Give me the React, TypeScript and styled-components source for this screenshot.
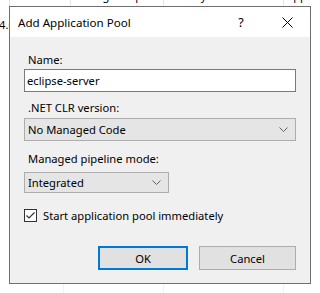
import styled, { createGlobalStyle } from "styled-components";

const Global = createGlobalStyle`
  html, body {
    margin: 0;
    padding: 0;
    background: #ffffff;
  }
  body {
    width: 320px;
    height: 293px;
    overflow: hidden;
    font-family: "Noto Sans", "Open Sans", sans-serif;
    font-size: 11.2px;
    color: #000;
  }
`;

const Screen = styled.div`
  position: relative;
  width: 320px;
  height: 293px;
  overflow: hidden;
  background: #ffffff;
`;

/* list view behind the dialog */
const HeaderRow = styled.div`
  display: flex;
  height: 22px;
  margin-top: -14px;
  align-items: flex-end;
  line-height: 20px;
  white-space: nowrap;
`;

const HeaderCell = styled.div<{ $w: number; $sep?: boolean }>`
  flex: 0 0 ${(p) => p.$w}px;
  height: 22px;
  padding-left: 2px;
  box-sizing: border-box;
  border-right: ${(p) => (p.$sep ? "1px solid #e5e5e5" : "none")};
  overflow: hidden;
`;

const DataRow = styled.div`
  display: flex;
  height: 20px;
  margin-top: 7px;
  line-height: 20px;
  white-space: nowrap;
  margin-left: -1px;
`;

const GridLines = styled.div`
  display: flex;
  height: 260px;
`;

const GridCol = styled.div<{ $w: number }>`
  flex: 0 0 ${(p) => p.$w}px;
  border-right: 1px solid #e9f2fb;
  box-sizing: border-box;
`;

/* dialog */
const Dialog = styled.div`
  position: absolute;
  left: 9px;
  top: 6px;
  width: 302px;
  height: 278px;
  box-sizing: border-box;
  border: 1px solid #6f6f6f;
  background: #f0f0f0;
  display: flex;
  flex-direction: column;
`;

const TitleBar = styled.div`
  height: 30px;
  background: #ffffff;
  display: flex;
  align-items: center;
  padding-left: 8px;
`;

const Title = styled.div`
  flex: 1;
  font-size: 11.6px;
`;

const TitleButton = styled.div<{ $w: number }>`
  width: ${(p) => p.$w}px;
  height: 30px;
  display: flex;
  align-items: center;
  justify-content: center;
  font-size: 12.5px;
`;

const Body = styled.div`
  flex: 1;
  padding: 15px 14px 0 14px;
  display: flex;
  flex-direction: column;
`;

const Label = styled.div<{ $mt: number }>`
  margin-top: ${(p) => p.$mt}px;
  height: 15px;
  line-height: 15px;
  padding-left: 4px;
`;

const TextBox = styled.div`
  margin-top: 2px;
  height: 23px;
  box-sizing: border-box;
  border: 1px solid #7a7a7a;
  background: #ffffff;
  padding-left: 2px;
  line-height: 21px;
`;

const Select = styled.div<{ $w?: number; $h: number; $mt: number }>`
  margin-top: ${(p) => p.$mt}px;
  width: ${(p) => (p.$w ? `${p.$w}px` : "auto")};
  height: ${(p) => p.$h}px;
  box-sizing: border-box;
  border: 1px solid #adadad;
  background: #e5e5e5;
  display: flex;
  align-items: center;
  padding: 0 7px 0 3px;
`;

const SelectText = styled.div`
  flex: 1;
`;

const CheckRow = styled.div`
  margin-top: 16px;
  display: flex;
  align-items: center;
  gap: 6px;
  height: 13px;
`;

const CheckBox = styled.div`
  width: 13px;
  height: 13px;
  box-sizing: border-box;
  border: 1px solid #333333;
  background: #ffffff;
  display: flex;
  align-items: center;
  justify-content: center;
`;

const Buttons = styled.div`
  margin-top: 24px;
  display: flex;
  justify-content: flex-end;
  gap: 11px;
`;

const Button = styled.div<{ $primary?: boolean; $w: number }>`
  width: ${(p) => p.$w}px;
  height: 24px;
  box-sizing: border-box;
  background: #e1e1e1;
  border: ${(p) => (p.$primary ? "2px solid #0078d7" : "1px solid #adadad")};
  display: flex;
  align-items: center;
  justify-content: center;
`;

const Chevron = () => (
  <svg width="9" height="5" viewBox="0 0 9 5">
    <path d="M0.5 0.5 L4.5 4.5 L8.5 0.5" fill="none" stroke="#606060" strokeWidth="1" />
  </svg>
);

export default function App() {
  return (
    <Screen>
      <Global />
      <HeaderRow>
        <HeaderCell $w={10} $sep>
          E
        </HeaderCell>
        <HeaderCell $w={61} $sep>
          CLR V...
        </HeaderCell>
        <HeaderCell $w={93} $sep>
          Managed Pipel...
        </HeaderCell>
        <HeaderCell $w={120} $sep>
          Identity
        </HeaderCell>
        <HeaderCell $w={40}>Applic</HeaderCell>
      </HeaderRow>
      <DataRow>4.0</DataRow>
      <GridLines>
        <GridCol $w={64} />
        <GridCol $w={100} />
        <GridCol $w={120} />
      </GridLines>

      <Dialog>
        <TitleBar>
          <Title>Add Application Pool</Title>
          <TitleButton $w={46}>?</TitleButton>
          <TitleButton $w={46}>
            <svg width="11" height="11" viewBox="0 0 11 11">
              <path d="M0.5 0.5 L10.5 10.5 M10.5 0.5 L0.5 10.5" stroke="#000" strokeWidth="1" />
            </svg>
          </TitleButton>
        </TitleBar>
        <Body>
          <Label $mt={0}>Name:</Label>
          <TextBox>eclipse-server</TextBox>
          <Label $mt={8}>.NET CLR version:</Label>
          <Select $h={23} $mt={3}>
            <SelectText>No Managed Code</SelectText>
            <Chevron />
          </Select>
          <Label $mt={10}>Managed pipeline mode:</Label>
          <Select $w={145} $h={21} $mt={6}>
            <SelectText>Integrated</SelectText>
            <Chevron />
          </Select>
          <CheckRow>
            <CheckBox>
              <svg width="11" height="11" viewBox="0 0 11 11">
                <path d="M1.5 5.5 L4 8 L9.5 2.5" fill="none" stroke="#333" strokeWidth="1.2" />
              </svg>
            </CheckBox>
            <span>Start application pool immediately</span>
          </CheckRow>
          <Buttons>
            <Button $primary $w={90}>
              OK
            </Button>
            <Button $w={97}>Cancel</Button>
          </Buttons>
        </Body>
      </Dialog>
    </Screen>
  );
}
